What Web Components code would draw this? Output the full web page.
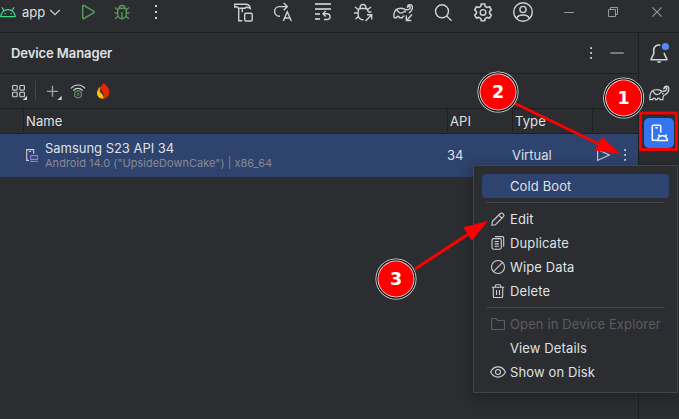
<!DOCTYPE html>
<html lang="en">
<head>
<meta charset="utf-8">
<title>Device Manager</title>
<style>
html,body{margin:0;height:100%;overflow:hidden;background:#2b2d30}
</style>
</head>
<body>
<ide-window></ide-window>
<script>
const ICONS = {
  android: [20, '<g fill="none" stroke="#3ddc84" stroke-width="1.2"><path d="M2.8 14.7C3 10.5 6 7.6 10 7.6S17 10.5 17.200 14.700Z"/><path d="M5.800 8.600 4 5.300M14.200 8.600 16 5.300"/></g><path fill="#3ddc84" stroke="none" d="M6.400 11h1.300v1.300H6.400zM12.400 11h1.300v1.300h-1.300z"/>'],
  chevron: [12, '<path stroke-width="1.200" d="m1.200 4 4.800 4.600L10.800 4"/>'],
  run: [20, '<path stroke="#57965c" stroke-width="1.500" d="M4.700 4.200v11.600c0 .7.600 1 1.200.7l10-5.800c.6-.3.600-1 0-1.400l-10-5.800c-.6-.3-1.200 0-1.200.7z"/>'],
  bug: [20, '<g stroke="#57965c" stroke-width="1.400"><path d="M5.700 8.500C5.700 7 6.700 6.300 8 6.300h4c1.300 0 2.300.7 2.300 2.200V12a4.300 4.800 0 0 1-8.600 0z"/><path d="M7 6.200C7 4.400 8 3.500 10 3.500s3 .9 3 2.700M10 10v6M2.500 11h3.200M14.300 11h3.200M3 5.500 5.900 8M17 5.500 14.100 8M3 16.800l3.200-2.500M17 16.800l-3.200-2.500"/></g>'],
  dots: [20, '<g fill="#ced0d6" stroke="none"><rect x="9" y="3" width="2" height="2"/><rect x="9" y="9" width="2" height="2"/><rect x="9" y="15" width="2" height="2"/></g>'],
  dotsSmall: [20, '<g fill="#ced0d6" stroke="none"><rect x="9.200" y="4.200" width="1.800" height="1.800"/><rect x="9.200" y="9.100" width="1.800" height="1.800"/><rect x="9.200" y="14" width="1.800" height="1.800"/></g>'],
  hammer: [20, '<path d="M1.700 2.200h11c2.600 0 4.300 1.600 4.700 4.300-1.500-1-2.800-1.300-4.400-1.300L12 6.200H5.500L4.300 5H1.700zM5.700 6.200v12.500h3.600M9.300 6.200v4"/><rect x="11.700" y="11.300" width="7.500" height="7.700" rx="1.300"/>'],
  rerun: [20, '<path d="M7 14.200H6.400a4.500 4.500 0 0 1 0-9.600H14M10.700 1l3.600 3.600-3.600 3.600M10.300 19l4-9.300 4 9.300M11.800 16h5"/>'],
  wrap: [20, '<path stroke-width="1.900" stroke="#b4b6bb" d="M2 2h16M2 7h16M2 12h5M2 17h5"/><path d="M12.700 9 10 11.800l2.700 2.700M10.200 11.800h4.500a2.900 2.900 0 0 1 0 5.700H11"/>'],
  bugAttach: [20, '<path d="M10.500 17.700C7.500 18 5.200 16 5.200 13V9.200c0-1.700 1-2.700 2.600-2.700h4.500c1.600 0 2.600 1 2.600 2.700v.5M7 6.300c0-2.500 1-3.800 3-3.800s3 1.300 3 3.800M1 11h4M15 10h3.500M2 5l3.500 2.800M18 5l-3.500 2.800M2.500 17l3.200-2.600M12.500 19l6-6M14 12.800h4.700v4.700"/>'],
  gradleSync: [20, '<path d="M1 15.700c-.4-4 1-8 4-9 2.300-.8 4.700-.4 6.500.5 1.400.7 3.500.7 4.800 0 1.400-.8 1.300-2.600 0-2.800-.8-.1-1.200.3-1.800.6.200-2.600 4.500-3.600 5 .2.300 2.600-2 4.700-3.500 5.900M1 15.700h2.600c.3-2 2.500-2 2.900 0h3c.2-1.300.8-1.800 2-1.800M3.500 7.600c2 1.500 2 3.600 4.500 3.500 2 0 3-1.300 4.500-2.500M12.500 10.200h.6M19 12.500 14 18M13.300 13.500v5h5"/>'],
  gradle: [22, '<path stroke-width="1.300" d="M2 17.700c-.5-4.500.6-8.500 4-9.700 2.500-.8 5-.3 7 .7 1.400.7 3.700.6 5-.3 1.400-1 1-2.700-.3-2.700-.8 0-1.200.5-1.900.8.4-2.700 4.600-3.400 5 .3.300 3.200-2.800 5.500-5 6.700-.8.600-1 2.500-1 4.200h-2.600c-.3-2.200-2.800-2.200-3.100 0h-1.500c-.3-2.200-2.700-2.200-3 0zM4.700 8.900c1.600 1 1.500 3.800 4.300 3.800 2.200 0 3-1.700 4.500-2.900M14 11.500l1.600.4"/>'],
  search: [20, '<circle cx="9" cy="9.300" r="6.500"/><path d="m13.700 14 4.800 4.700"/>'],
  gear: [20, '<path stroke-width="1.600" d="M8.300 2h3.400l.6 2.400 1.900 1.100 2.400-.7 1.700 3-1.700 1.700v1.900l1.700 1.700-1.700 3-2.400-.7-1.900 1.100-.6 2.300H8.300l-.6-2.300-1.900-1.100-2.400.7-1.700-3 1.700-1.700V9.500L1.700 7.800l1.700-3 2.400.7 1.900-1.100z"/><circle cx="10" cy="10.400" r="2.800"/>'],
  user: [20, '<circle cx="10" cy="10" r="9.300"/><circle cx="10" cy="7.500" r="3.100"/><path d="M3.500 16.500c.8-2.300 2.800-3.500 6.500-3.500s5.700 1.200 6.500 3.500"/>'],
  winMin: [12, '<path stroke="#97999c" stroke-width="1" d="M1 6.500h10"/>'],
  winRestore: [12, '<path stroke="#97999c" stroke-width="1" d="M1.500 3.500h7v7h-7zM3.500 3.500v-2h7v7h-2"/>'],
  winClose: [12, '<path stroke="#97999c" stroke-width="1.100" d="m1.300 1.300 9.400 9.400M10.700 1.300l-9.400 9.400"/>'],
  minus: [16, '<path stroke="#868a91" stroke-width="1.700" d="M1.300 8h13.400"/>'],
  bell: [22, '<path stroke-width="1.600" d="M12.300 3.300C8.500 2.300 5.700 4.800 5.700 8.300v3.500L3.200 17v.8h15.600V17l-2.500-5.200v-1"/><path fill="#ced0d6" stroke="none" d="M9 19.200h4.200c0 2.100-4.200 2.100-4.200 0z"/><circle cx="17.400" cy="4.500" r="3.600" fill="#548af7" stroke="none"/>'],
  grid: [20, '<g stroke-width="1.100"><rect x="3.600" y="4.500" width="4.600" height="4.600" rx=".8"/><rect x="10.800" y="4.500" width="4.600" height="4.600" rx=".8"/><rect x="3.600" y="11.200" width="4.600" height="4.600" rx=".8"/><rect x="10.800" y="11.200" width="4.600" height="4.600" rx=".8"/></g><path fill="#ced0d6" stroke="none" d="M18 14.700V19h-4.300z"/>'],
  plus: [20, '<path stroke="#a0a2a7" stroke-width="1.300" d="M4 10.300h11M9.500 4.800v11"/><path fill="#ced0d6" stroke="none" d="M18.700 14.700V19h-4.300z"/>'],
  wifi: [20, '<path stroke-width="1.200" d="M3 7.300c3.800-4.400 10.200-4.400 14 0M5.300 9.600c2.600-3 6.800-3 9.400 0"/><g stroke="#57965c"><circle cx="10" cy="13.300" r="3.500" stroke-width="1.200"/><circle cx="10" cy="13.300" r="1" stroke-width="1"/></g>'],
  flame: [20, '<path fill="#ff9100" stroke="none" d="M7 5.500C5.800 7 4.200 9 4 11.300c-.2 2.200.9 4.700 3.400 5.900z"/><path fill="#ffc400" stroke="none" d="M4.200 10c3 .4 6 3.300 6.800 7.300-3.800 1.400-7.600-2-6.800-7.300z"/><path fill="#dd2c00" stroke="none" d="M10.700 2.200C8 4.400 7 6.200 7.100 8.300c2.700 2 4 5 3.700 9.400 3.500-.4 5.500-3.400 5.500-6.900 0-3.800-2.600-6.600-5.600-8.600z"/>'],
  device: [16, '<path stroke-width="1.100" d="M5 13.400H2.700V2.600h7v4.200M5.200 4.500h1.800"/><g stroke="#a571e6" stroke-width="1.100"><rect x="6.600" y="8.600" width="7" height="3.800" rx=".4"/><path d="M6 14.400h8.200"/></g>'],
  play: [20, '<path stroke-width="1.100" d="M4.600 4.500v11l11.700-5.500z"/>'],
  deviceManager: [22, '<g stroke="#fff" stroke-width="1.500"><path d="M9 18.300H5.200c-.6 0-.9-.3-.9-.9V4.100c0-.6.300-.9.900-.9h6.600c.6 0 .9.300.9.900v6.500M7.300 5.800h2.500M9.700 18.600c.2-3 2-4.900 4.800-4.900s4.600 1.900 4.800 4.900zM11.700 14.500l-1.300-2M17.300 14.500l1.300-2"/></g>'],
  pencil: [16, '<path stroke-width="1.100" d="m2.300 10.500 8-8c.8-.7 1.600-.7 2.300 0l.9.900c.7.700.7 1.500 0 2.300l-8 8-3.700.5zM8.700 4l3.300 3.300"/>'],
  copy: [16, '<g stroke-width="1.100"><rect x="2" y="3.600" width="9.300" height="10.600" rx="1.600"/><path d="M5 1.600h7.200c.9 0 1.500.6 1.500 1.500v8.700M4.600 6.500h4.200M4.600 8.900h4.200M4.600 11.300h4.200"/></g>'],
  forbid: [16, '<g stroke-width="1.100"><circle cx="8" cy="8" r="6.500"/><path d="m3.400 12.600 9.200-9.200"/></g>'],
  trash: [16, '<path stroke-width="1.100" d="M1.800 4.300h12.400M5.200 4.200V3c0-.8.400-1.300 1.200-1.300h3.200c.8 0 1.200.5 1.200 1.300v1.200M3.300 4.500v8.700c0 .8.500 1.300 1.300 1.300h6.800c.8 0 1.300-.5 1.300-1.300V4.500M6.500 7v5M9.500 7v5"/>'],
  folder: [16, '<path stroke="#5a5d63" stroke-width="1.100" d="M1.600 12.700V3.300c0-.5.300-.8.800-.8h3.300l2 2h6c.5 0 .8.300.8.800v7.400c0 .5-.3.800-.8.800H2.400c-.5 0-.8-.3-.8-.8z"/>'],
  eye: [16, '<g stroke-width="1.100"><path d="M.6 8C2.300 4.600 5 2.900 8 2.900s5.700 1.700 7.400 5.100c-1.700 3.400-4.400 5.100-7.400 5.100S2.300 11.400.6 8z"/><circle cx="8" cy="8" r="2.500"/></g>'],
  none: [16, '']
};
class Base extends HTMLElement {
  connectedCallback() {
    if (!this.shadowRoot) this.attachShadow({ mode: 'open' }).innerHTML = this.render();
  }
}
customElements.define('ui-icon', class extends Base {
  render() {
    const [s, body] = ICONS[this.getAttribute('name')];
    return `<style>:host{display:block;flex:none;width:${s}px;height:${s}px}svg{display:block}</style>
    <svg width="${s}" height="${s}" viewBox="0 0 ${s} ${s}" fill="none" stroke="#ced0d6" stroke-width="1.400">${body}</svg>`;
  }
});
customElements.define('title-bar', class extends Base {
  render() {
    return `<style>:host{display:flex;height:24px;padding-bottom:8px;align-items:center;border-bottom:1px solid #1e1f22}
    .app{margin-left:4px;width:27px;line-height:20px}
    .g{display:flex;align-items:center}.run{gap:14px;margin-left:17px}.tools{gap:20px;margin-left:67px}.win{gap:32px;margin-left:30px}</style>
    <ui-icon name="android" style="margin-left:-2px"></ui-icon><span class="app">app</span><ui-icon name="chevron"></ui-icon>
    <div class="g run"><ui-icon name="run"></ui-icon><ui-icon name="bug"></ui-icon><ui-icon name="dots"></ui-icon></div>
    <div class="g tools">${['hammer','rerun','wrap','bugAttach','gradleSync','search','gear','user'].map(n => `<ui-icon name="${n}"></ui-icon>`).join('')}</div>
    <div class="g win"><ui-icon name="winMin"></ui-icon><ui-icon name="winRestore"></ui-icon><ui-icon name="winClose"></ui-icon></div>`;
  }
});
customElements.define('panel-header', class extends Base {
  render() {
    return `<style>:host{display:flex;height:40px;align-items:center;padding:0 13px 0 11px;border-bottom:1px solid #1e1f22;font-weight:600;color:#dfe1e5;letter-spacing:-.08px}
    span{flex:1}</style><span><slot></slot></span><ui-icon name="dotsSmall" style="margin-right:8px"></ui-icon><ui-icon name="minus"></ui-icon>`;
  }
});
customElements.define('panel-tools', class extends Base {
  render() {
    return `<style>:host{display:flex;height:34px;align-items:center;padding-left:9px;border-bottom:1px solid #1e1f22}i{width:1px;height:20px;background:#43454a;margin:0 7px 0 6px}</style>
    <ui-icon name="grid"></ui-icon><i></i><ui-icon name="plus"></ui-icon><ui-icon name="wifi" style="margin-left:5px"></ui-icon><ui-icon name="flame" style="margin-left:5px"></ui-icon>`;
  }
});
customElements.define('device-table', class extends Base {
  render() {
    return `<style>:host{display:block}
    .row{display:grid;grid-template-columns:23px 424px 65px 80px 1fr;align-items:center}
    .head{height:24px;border-bottom:1px solid #1e1f22}
    .head span{border-left:1px solid #1e1f22;height:22px;line-height:23px;padding-left:2px;letter-spacing:.1px}
    .body{height:42px;padding-bottom:1px;background:#2e436e}
    .dev{display:flex;align-items:center;gap:5px;padding-left:1px}
    b{display:block;font-weight:400;line-height:16px;letter-spacing:-.03px}small{display:block;font-size:11px;line-height:15px;color:#868a91;letter-spacing:.02px}
    .act{display:flex;align-items:center;gap:2px;padding-left:1px}</style>
    <div class="row head"><div></div><span>Name</span><span>API</span><span>Type</span><span></span></div>
    <div class="row body"><div></div><div class="dev"><ui-icon name="device"></ui-icon><div><b>Samsung S23 API 34</b><small>Android 14.0 ("UpsideDownCake") | x86_64</small></div></div>
    <div>34</div><div>Virtual</div><div class="act"><ui-icon name="play"></ui-icon><ui-icon name="dotsSmall"></ui-icon></div></div>`;
  }
});
customElements.define('side-bar', class extends Base {
  render() {
    return `<style>:host{display:flex;flex-direction:column;align-items:center;border-left:1px solid #1e1f22;padding-top:9px}
    .on{box-sizing:border-box;width:30px;height:30px;margin-top:14px;padding:4px;border-radius:5px;background:#3574f0}</style>
    <ui-icon name="bell"></ui-icon><ui-icon name="gradle" style="margin-top:18px"></ui-icon><div class="on"><ui-icon name="deviceManager"></ui-icon></div>`;
  }
});
customElements.define('menu-item', class extends Base {
  render() {
    return `<style>:host{display:flex;align-items:center;height:24px;padding-left:8px;gap:4px;border-radius:4px;letter-spacing:.12px;white-space:nowrap}
    :host([selected]){background:#2e436e}:host([disabled]){color:#5a5d63}</style><ui-icon name="${this.getAttribute('icon') || 'none'}"></ui-icon><span><slot></slot></span>`;
  }
});
customElements.define('menu-line', class extends Base {
  render() { return '<style>:host{display:block;height:1px;background:#43454a;margin:4px}</style>'; }
});
customElements.define('context-menu', class extends Base {
  render() {
    return `<style>:host{position:absolute;left:473px;top:165px;width:205px;height:228px;box-sizing:border-box;border:1px solid #43454a;background:#2b2d30;padding:8px;box-shadow:0 3px 12px 2px rgba(0,0,0,.25)}</style><slot></slot>`;
  }
});
/* Numbered markers and arrows that lie over the window. */
customElements.define('tour-overlay', class extends Base {
  render() {
    const mark = (x, y, n) => `<g transform="translate(${x} ${y})"><circle r="20.500" fill="#eee"/><circle r="19.700" fill="#000"/><circle r="18.500" fill="#fff"/><circle r="17.700" fill="#f00"/><text y="6.200" text-anchor="middle">${n}</text></g>`;
    return `<style>:host{position:absolute;inset:0}svg{display:block}text{font:bold 17.500px "DejaVu Sans",sans-serif;fill:#fff}</style>
    <svg width="679" height="419"><rect x="640.500" y="113" width="36" height="36.500" fill="none" stroke="#f00" stroke-width="2.800"/>
    <g stroke="#f00" stroke-width="3" fill="#f00"><path d="m514 103 86 41.500M415 269l55-36"/></g>
    <g fill="#f00"><path d="m602 136.500 18 17.300-25-3zM463.300 227.300 488 221l-16.300 19.700z"/></g>
    ${mark(623.7, 98, 1)}${mark(498, 92, 2)}${mark(396, 279, 3)}</svg>`;
  }
});
customElements.define('ide-window', class extends Base {
  render() {
    return `<style>:host{display:flex;flex-direction:column;position:relative;width:679px;height:419px;background:#2b2d30;color:#dfe1e5;font:13px Inter,sans-serif}
    .main{flex:1;display:grid;grid-template-columns:638px 41px}</style>
    <title-bar></title-bar><div class="main"><div><panel-header>Device Manager</panel-header><panel-tools></panel-tools><device-table></device-table></div><side-bar></side-bar></div>
    <context-menu><menu-item selected>Cold Boot</menu-item><menu-line></menu-line>
    <menu-item icon="pencil">Edit</menu-item><menu-item icon="copy">Duplicate</menu-item><menu-item icon="forbid">Wipe Data</menu-item><menu-item icon="trash">Delete</menu-item><menu-line></menu-line>
    <menu-item icon="folder" disabled>Open in Device Explorer</menu-item><menu-item>View Details</menu-item><menu-item icon="eye">Show on Disk</menu-item></context-menu><tour-overlay></tour-overlay>`;
  }
});
</script>
</body>
</html>
